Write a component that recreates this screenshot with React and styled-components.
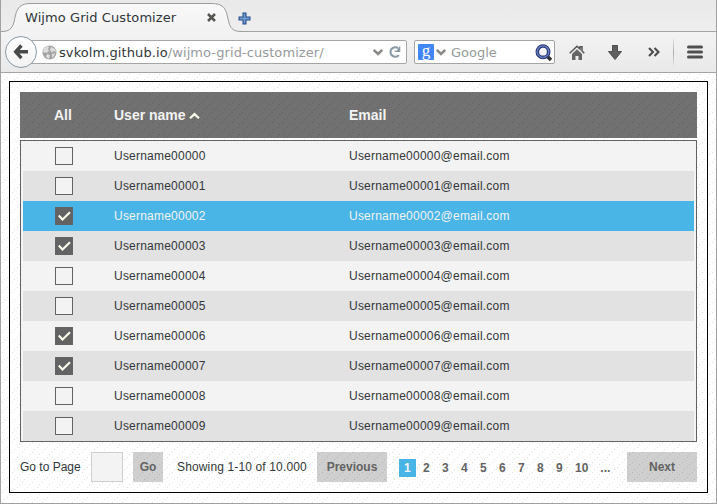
import React from 'react';
import styled, { createGlobalStyle, css } from 'styled-components';

const dots = `url("data:image/svg+xml,%3Csvg xmlns='http://www.w3.org/2000/svg' width='10' height='10' shape-rendering='crispEdges'%3E%3Cg fill='%23000' fill-opacity='.12'%3E%3Crect x='8' y='1' width='1' height='1'/%3E%3Crect x='6' y='4' width='1' height='1'/%3E%3Crect x='3' y='6' width='1' height='1'/%3E%3Crect x='1' y='9' width='1' height='1'/%3E%3C/g%3E%3C/svg%3E")`;

const GlobalStyle = createGlobalStyle`
  *, *::before, *::after { box-sizing: border-box; }
  body { margin: 0; overflow: hidden; }
`;

const Window = styled.div`
  width: 717px;
  height: 504px;
  display: flex;
  flex-direction: column;
  border: 1px solid #a2a2a2;
  border-top: 0;
  background: #ececec;
  font-family: 'DejaVu Sans', sans-serif;
`;

const TabStrip = styled.div`
  height: 32px;
  display: flex;
  flex: none;
  background: linear-gradient(#e9e9e9, #eeeeee);
  box-shadow: inset 0 -1px #a3a3a3;
`;

const Tab = styled.div`
  position: relative;
  width: 233px;
  height: 32px;
  padding: 3px 18px 0 24px;
  display: flex;
  align-items: center;
  justify-content: space-between;
  > svg:first-child { position: absolute; left: -1px; top: 0; }
`;

const TabTitle = styled.span`
  position: relative;
  font-size: 13px;
  line-height: 20px;
  letter-spacing: 0.08px;
  color: #30363a;
`;

const TabClose = styled.svg`
  position: relative;
`;

const NewTab = styled.svg`
  margin: 12px 0 0 4px;
`;

const Toolbar = styled.div`
  height: 41px;
  flex: none;
  display: flex;
  align-items: center;
  padding-left: 4px;
  background: linear-gradient(#f3f3f3, #e9e9e9);
  border-bottom: 1px solid #a3a3a3;
`;

const BackButton = styled.div`
  position: relative;
  z-index: 1;
  width: 32px;
  height: 32px;
  flex: none;
  display: flex;
  align-items: center;
  justify-content: center;
  border: 1px solid #8b9aa7;
  border-radius: 50%;
  background: linear-gradient(#ffffff, #f3f3f3);
`;

const Field = styled.div`
  height: 24px;
  display: flex;
  align-items: center;
  flex: none;
  border: 1px solid #a5a5a5;
  border-radius: 2px;
  background: #fff;
  color: #969a9b;
  font-size: 13px;
  white-space: nowrap;
`;

const AddressBar = styled(Field)`
  width: 378px;
  margin-left: -8px;
  padding: 0 4px 0 12px;
  > svg:last-child { margin-left: 5px; }
`;

const Address = styled.span`
  flex: 1;
  margin-left: 2px;
  letter-spacing: 0.09px;
  b { font-weight: 400; color: #30363a; }
`;

const SearchBar = styled(Field)`
  width: 141px;
  margin-left: 7px;
  padding: 0 2px 0 3px;
`;

const EngineBadge = styled.span`
  width: 16px;
  height: 16px;
  margin-right: 2px;
  border-radius: 1px;
  background: #4285f4;
  color: #fff;
  font: 17px/13px 'Liberation Serif', serif;
  text-align: center;
`;

const SearchHint = styled.span`
  flex: 1;
  margin-left: 5px;
`;

const Tools = styled.div`
  flex: 1;
  height: 100%;
  display: flex;
  align-items: center;
  padding-left: 14px;
`;

const HomeIcon = styled.svg``;
const DownloadIcon = styled.svg`margin-left: 23px;`;
const MoreIcon = styled.svg`margin-left: 26px;`;
const MenuIcon = styled.svg`margin-left: 13px;`;
const Divider = styled.i`
  width: 1px;
  height: 32px;
  margin-left: 13px;
  background: linear-gradient(transparent, #aaa, transparent);
`;

const Viewport = styled.main`
  flex: 1;
  padding: 8px;
  background: #fff ${dots} 0 0;
  font-family: 'Liberation Sans', Arial, sans-serif;
  font-size: 12px;
  color: #333739;
`;

const GridFrame = styled.section`
  width: 699px;
  height: 412px;
  padding: 10px;
  border: 1px solid #000;
`;

const columns = css`
  display: grid;
  grid-template-columns: 60px 235px 1fr;
  align-items: center;
`;

const HeaderRow = styled.div`
  ${columns}
  height: 46px;
  padding-left: 34px;
  background: rgba(0, 0, 0, 0.555);
  color: #f3f3f3;
  font-size: 14px;
  font-weight: 700;
`;

const SortArrow = styled.svg`
  margin-left: 3px;
`;

const Body = styled.div`
  height: 302px;
  margin-top: 2px;
  padding: 0 2px;
  border: 1px solid #636363;
  background: #f3f3f3;
`;

const Row = styled.div`
  ${columns}
  height: 30px;
  padding-left: 31px;
  letter-spacing: 0.22px;
  background: ${(p) => (p.$selected ? '#49b5e6' : p.$alt ? '#e2e2e2' : '#f3f3f3')};
  color: ${(p) => (p.$selected ? '#f3f3f3' : '#333739')};
`;

const CheckBox = styled.span`
  width: 18px;
  height: 18px;
  margin-left: 1px;
  display: block;
  border: 1px solid #636363;
  background: ${(p) => (p.$checked ? '#636363' : '#f3f3f3')};
  svg { display: block; }
`;

const Pager = styled.footer`
  height: 30px;
  margin-top: 10px;
  display: flex;
  align-items: center;
  white-space: nowrap;
`;

const GoLabel = styled.label`
  width: 71px;
`;

const PageInput = styled.input`
  width: 32px;
  height: 30px;
  padding: 0;
  border: 1px solid #cfcfcf;
  border-radius: 0;
  background: #f3f3f3;
`;

const Button = styled.button`
  width: ${(p) => p.$width}px;
  height: 30px;
  padding: 0;
  border: 0;
  background: rgba(0, 0, 0, 0.19);
  color: #636363;
  font: 700 12px 'Liberation Sans', Arial, sans-serif;
`;

const GoButton = styled(Button)`
  margin-left: 10px;
`;

const Summary = styled.span`
  width: 140px;
  margin-left: 14px;
  letter-spacing: 0.14px;
`;

const Pages = styled.div`
  display: flex;
  flex: 1;
  gap: 2px;
  margin: 1px 0 0 12px;
`;

const Page = styled.span`
  height: 18px;
  padding: 0 5px;
  min-width: 17px;
  line-height: 18px;
  font-weight: 700;
  color: ${(p) => (p.$current ? '#f3f3f3' : '#636363')};
  background: ${(p) => (p.$current ? '#49b5e6' : 'transparent')};
`;

const Chevron = () => (
  <svg width="10" height="7" fill="none" stroke="#888a85" strokeWidth="2.5">
    <path d="M.8 1 5 5 9.2 1" />
  </svg>
);

const checkedRows = [2, 3, 6, 7];
const pages = ['1', '2', '3', '4', '5', '6', '7', '8', '9', '10', '...'];

function BrowserChrome() {
  return (
    <>
      <TabStrip>
        <Tab>
          <svg width="243" height="32">
            <defs>
              <linearGradient id="tabFill" x2="0" y2="1">
                <stop stopColor="#f9f9f9" />
                <stop offset="1" stopColor="#f2f2f2" />
              </linearGradient>
            </defs>
            <path
              d="M1 31.5C9 31.5 12 29 14 22 16 12 17 3.5 30 3.5H211C225 3.5 226 10 228 19 230 28 232 31.5 242 31.5V32H1Z"
              fill="url(#tabFill)"
            />
            <path
              d="M1 31.5C9 31.5 12 29 14 22 16 12 17 3.5 30 3.5H211C225 3.5 226 10 228 19 230 28 232 31.5 242 31.5"
              fill="none"
              stroke="#9b9b9b"
            />
          </svg>
          <TabTitle>Wijmo Grid Customizer</TabTitle>
          <TabClose width="9" height="9" stroke="#555753" strokeWidth="2.5">
            <path d="m1 1 7 7M8 1 1 8" />
          </TabClose>
        </Tab>
        <NewTab width="13" height="13">
          <path d="M4.5.5h4v4h4v4h-4v4h-4v-4h-4v-4h4Z" fill="#204a87" />
          <path d="M6.5 1.5v10M1.5 6.5h10" stroke="#729fcf" strokeWidth="1.8" />
        </NewTab>
      </TabStrip>
      <Toolbar>
        <BackButton>
          <svg width="16" height="16" fill="none" stroke="#484a4a" strokeWidth="3.4">
            <path d="M8.4 1.5 2.7 7.8l5.7 6.3M3 7.8h12" />
          </svg>
        </BackButton>
        <AddressBar>
          <svg width="15" height="15">
            <circle cx="7.5" cy="7.5" r="7" fill="#a2a2a2" />
            <path d="M2 3.5 5 1.2 7.3 2 6 4 7 6 4.5 8 1 7ZM9 2l4 2 1 3-3-1-1 2-2-3ZM5 9l3 1-1 4-3-2ZM10 9l3-1-1 3-2 2Z" fill="#dedede" />
          </svg>
          <Address><b>svkolm.github.io</b>/wijmo-grid-customizer/</Address>
          <Chevron />
          <svg width="14" height="14">
            <path d="M10.8 10.1A4.7 4.7 0 1 1 10 3.2" fill="none" stroke="#8a99a6" strokeWidth="2.2" />
            <path d="M12.3 1v6H6.5V5.7h2L12 1Z" fill="#8a99a6" />
          </svg>
        </AddressBar>
        <SearchBar>
          <EngineBadge>g</EngineBadge>
          <Chevron />
          <SearchHint>Google</SearchHint>
          <svg width="17" height="17">
            <path d="m12 12 4 4" stroke="#333" strokeWidth="3.6" />
            <circle cx="8" cy="7.7" r="5.7" fill="#f3f3f6" stroke="#243577" strokeWidth="3.6" />
            <circle cx="8" cy="7.7" r="5.8" fill="none" stroke="#6679bb" strokeWidth="1.5" />
          </svg>
        </SearchBar>
        <Tools>
          <HomeIcon width="16" height="15">
            <path d="M.7 8.2 8 1.2l3 2.8V1.7h2V6l2.3 2.2" fill="none" stroke="#555" strokeWidth="1.5" />
            <path d="M3 9 8 4.3 13 9V15H9.5v-4h-3v4H3Z" fill="#666" />
          </HomeIcon>
          <DownloadIcon width="14" height="15">
            <path d="M4.5.5h5v6h4L7 14.5.5 6.5h4Z" fill="#606060" stroke="#4d4d4d" />
          </DownloadIcon>
          <MoreIcon width="12" height="10" fill="none" stroke="#4b4b4b" strokeWidth="2.1">
            <path d="m1 1 4 4-4 4m5.5-8 4 4-4 4" />
          </MoreIcon>
          <Divider />
          <MenuIcon width="16" height="14" stroke="#505050" strokeWidth="3" strokeLinecap="round">
            <path d="M1.5 2h13M1.5 7h13M1.5 12h13" />
          </MenuIcon>
        </Tools>
      </Toolbar>
    </>
  );
}

export default function App() {
  return (
    <Window>
      <GlobalStyle />
      <BrowserChrome />
      <Viewport>
        <GridFrame>
          <HeaderRow>
            <span>All</span>
            <span>
              User name
              <SortArrow width="11" height="8" fill="none" stroke="#f8f8e8" strokeWidth="2.2">
                <path d="m1 6.3 4.5-4.2L10 6.3" />
              </SortArrow>
            </span>
            <span>Email</span>
          </HeaderRow>
          <Body>
            {Array.from({ length: 10 }, (_, i) => {
              const checked = checkedRows.includes(i);
              return (
                <Row key={i} $alt={i % 2 === 1} $selected={i === 2}>
                  <CheckBox $checked={checked}>
                    {checked && (
                      <svg width="16" height="16" fill="none" stroke="#fffff0" strokeWidth="2">
                        <path d="m2.8 7.5 3.7 4 7.5-7.2" />
                      </svg>
                    )}
                  </CheckBox>
                  <span>Username0000{i}</span>
                  <span>Username0000{i}@email.com</span>
                </Row>
              );
            })}
          </Body>
          <Pager>
            <GoLabel htmlFor="page">Go to Page</GoLabel>
            <PageInput id="page" />
            <GoButton $width={30}>Go</GoButton>
            <Summary>Showing 1-10 of 10.000</Summary>
            <Button $width={70}>Previous</Button>
            <Pages>
              {pages.map((p) => (
                <Page key={p} $current={p === '1'}>{p}</Page>
              ))}
            </Pages>
            <Button $width={70}>Next</Button>
          </Pager>
        </GridFrame>
      </Viewport>
    </Window>
  );
}
